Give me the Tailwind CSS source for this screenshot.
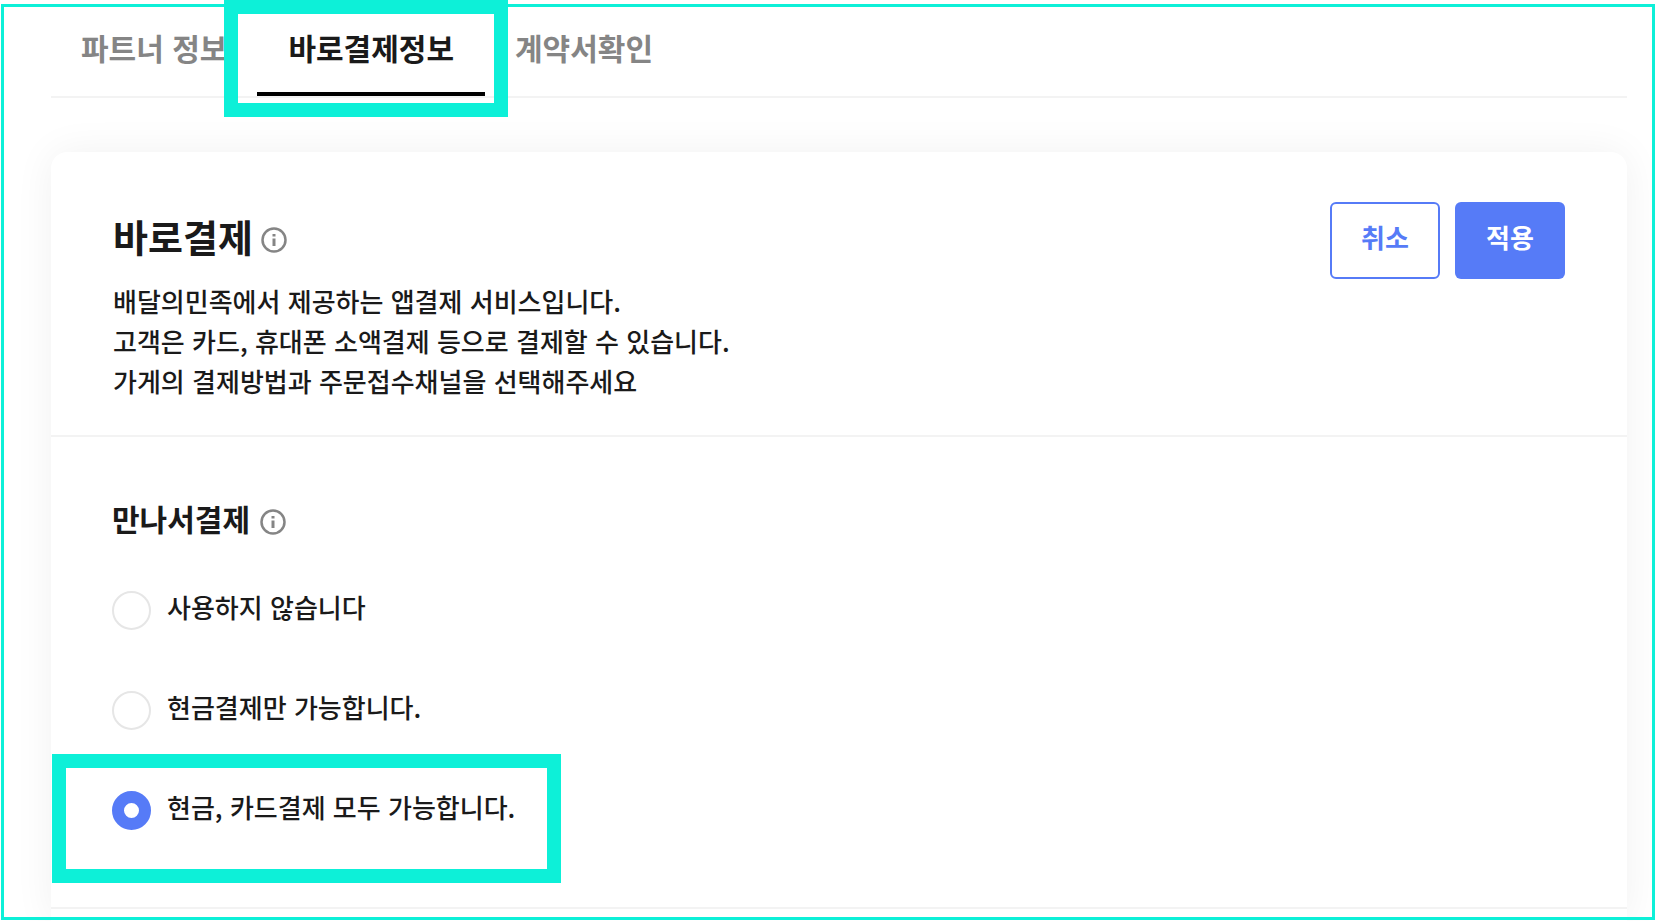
<!DOCTYPE html>
<html lang="ko">
<head>
    <meta charset="UTF-8">
    <meta name="viewport" content="width=device-width, initial-scale=1.0">
    <title>바로결제정보</title>
    <!-- Tailwind CSS CDN -->
    <script src="https://cdn.jsdelivr.net/npm/@tailwindcss/browser@4"></script>
</head>
<body class="relative bg-white font-['Noto_Sans_CJK_KR',sans-serif] text-[#1a1a1a]">
    <div class="flex min-h-screen flex-col overflow-hidden pl-[51px] pr-[29px]">
        <!-- Tabs -->
        <nav class="flex h-[98px] border-b-2 border-[#f3f3f3] text-[30px] font-bold leading-[44px] text-[#858585]">
            <button type="button" class="px-[30px] pb-[2px]">파트너 정보</button>
            <div class="relative">
                <button type="button" class="h-[96px] border-b-4 border-black px-[31px] pt-[2px] text-[#1a1a1a]" aria-current="page">바로결제정보</button>
                <div class="pointer-events-none absolute top-0 -left-[33px] -right-[23px] z-10 h-[117px] border-14 border-[#0df0d8]"></div>
            </div>
            <button type="button" class="px-[30px] pb-[2px]">계약서확인</button>
        </nav>

        <!-- Payment settings -->
        <main class="mt-[54px] flex-1 rounded-t-2xl bg-white shadow-[0_0_40px_rgba(0,20,10,0.06)]">
            <section class="flex items-start justify-between border-b-2 border-[#f3f3f3] px-[62px] pt-[50px] pb-[34px]">
                <div class="pt-[2px]">
                    <div class="mb-[5px] flex items-center gap-2">
                        <h1 class="pb-2 text-[38px] font-bold leading-[64px]">바로결제</h1>
                        <button type="button" aria-label="바로결제 안내">
                            <svg class="size-[26px] text-[#858585]" viewBox="0 0 26 26" fill="none" stroke="currentColor" stroke-width="2.5">
                                <circle cx="13" cy="13" r="11.5"/>
                                <path d="M13 11.5v7.5M13 7v2.5" stroke-width="3"/>
                            </svg>
                        </button>
                    </div>
                    <p class="text-[26px] font-medium leading-[40px]">배달의민족에서 제공하는 앱결제 서비스입니다.<br>고객은 카드, 휴대폰 소액결제 등으로 결제할 수 있습니다.<br>가게의 결제방법과 주문접수채널을 선택해주세요</p>
                </div>
                <div class="flex gap-[15px] text-[26px] font-bold">
                    <button type="button" class="h-[77px] w-[110px] rounded-md border-2 border-[#567bf7] pb-2 text-[#567bf7]">취소</button>
                    <button type="button" class="h-[77px] w-[110px] rounded-md bg-[#567bf7] pb-2 text-white">적용</button>
                </div>
            </section>

            <section class="border-b-2 border-[#f3f3f3] px-[61px] pt-[60px] pb-[77px]">
                <div class="mb-[44px] flex items-center gap-[10px]">
                    <h2 class="pb-2 text-[30px] font-bold leading-[42px]">만나서결제</h2>
                    <button type="button" aria-label="만나서결제 안내">
                        <svg class="size-[26px] text-[#858585]" viewBox="0 0 26 26" fill="none" stroke="currentColor" stroke-width="2.5">
                            <circle cx="13" cy="13" r="11.5"/>
                            <path d="M13 11.5v7.5M13 7v2.5" stroke-width="3"/>
                        </svg>
                    </button>
                </div>
                <div class="flex flex-col items-start gap-[61px] text-[26px] font-medium leading-[31px]">
                    <label class="flex items-center gap-4">
                        <input type="radio" name="meetPay" class="size-[39px] appearance-none rounded-full border-2 border-[#e6e6e6] checked:border-12 checked:border-[#567bf7]">
                        <span class="pb-2">사용하지 않습니다</span>
                    </label>
                    <label class="flex items-center gap-4">
                        <input type="radio" name="meetPay" class="size-[39px] appearance-none rounded-full border-2 border-[#e6e6e6] checked:border-12 checked:border-[#567bf7]">
                        <span class="pb-2">현금결제만 가능합니다.</span>
                    </label>
                    <label class="relative flex items-center gap-4">
                        <input type="radio" name="meetPay" class="size-[39px] appearance-none rounded-full border-2 border-[#e6e6e6] checked:border-12 checked:border-[#567bf7]" checked>
                        <span class="pb-2">현금, 카드결제 모두 가능합니다.</span>
                        <span class="pointer-events-none absolute -top-[37px] -left-[60px] h-[129px] w-[509px] border-14 border-[#0df0d8]"></span>
                    </label>
                </div>
            </section>
        </main>
    </div>

    <!-- Page outline -->
    <div class="pointer-events-none absolute inset-x-px top-1 bottom-px border-3 border-[#0df0d8]"></div>
</body>
</html>
